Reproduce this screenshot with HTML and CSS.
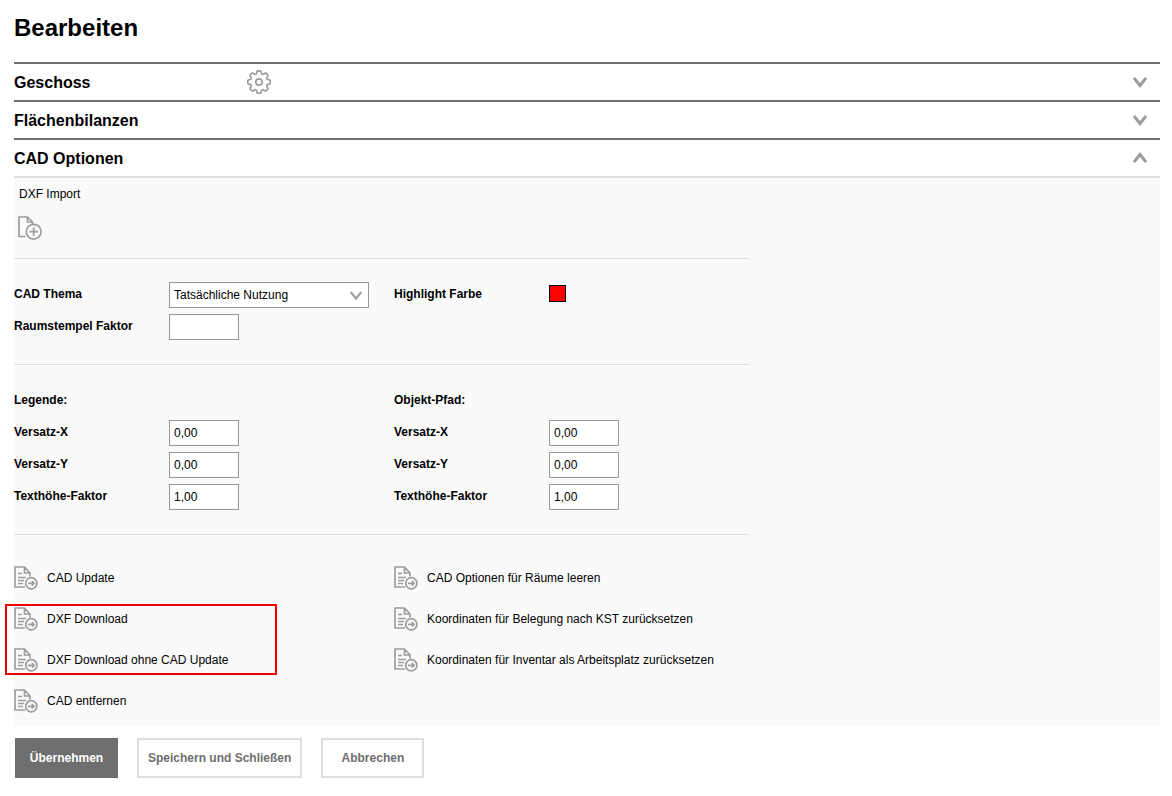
FILE: index.html
```html
<!DOCTYPE html>
<html lang="de">
<head>
<meta charset="utf-8">
<title>Bearbeiten</title>
<meta name="viewport" content="width=device-width, initial-scale=1">
<link rel="stylesheet" href="styles.css">
</head>
<body>
<svg class="sprite" aria-hidden="true">
  <symbol id="chevron-down" viewBox="0 0 16 12"><path d="M2 2l6 7.500 6-7.500"/></symbol>
  <symbol id="chevron-up" viewBox="0 0 16 12"><path d="M2 10l6-7.500 6 7.500"/></symbol>
  <symbol id="export" viewBox="0 0 24 24">
    <path d="M11 21H1V1h9.500l5.500 6v3.500M10.500 1v6H16M4 7.500h4M4 11.500h8M4 14.500h6M4 17.500h5"/>
    <circle cx="17.300" cy="17.300" r="5.600"/>
    <path d="M14 17.300h6M17.800 15l2.300 2.300-2.300 2.300"/>
  </symbol>
  <symbol id="import" viewBox="0 0 24 24">
    <path d="M7.500 20.500H1V1h8.500l5 5v2M9.500 1v5h5"/>
    <circle cx="15.700" cy="15.700" r="7.400"/>
    <path d="M15.700 11.500v8.400M11.500 15.700h8.400"/>
  </symbol>
  <symbol id="gear" viewBox="-12 -12 24 24">
    <path id="tooth" d="M-3.200-7.700C-2.200-8.100-2.300-8.900-2.300-9.700C-2.200-10.800-1.600-11.200-.9-11.200H.9C1.600-11.200 2.200-10.800 2.300-9.700C2.300-8.900 2.200-8.100 3.200-7.700"/>
    <use href="#tooth" transform="rotate(45)"/>
    <use href="#tooth" transform="rotate(90)"/>
    <use href="#tooth" transform="rotate(135)"/>
    <use href="#tooth" transform="rotate(180)"/>
    <use href="#tooth" transform="rotate(225)"/>
    <use href="#tooth" transform="rotate(270)"/>
    <use href="#tooth" transform="rotate(315)"/>
    <circle r="3.200"/>
  </symbol>
</svg>
<main class="page">
  <h1 class="title">Bearbeiten</h1>

  <section class="section">
    <h2 class="section-title">Geschoss</h2>
    <button class="icon-button" type="button" aria-label="Einstellungen"><svg class="icon"><use href="#gear"/></svg></button>
    <button class="toggle" type="button" aria-label="Geschoss aufklappen"><svg class="chevron"><use href="#chevron-down"/></svg></button>
  </section>
  <section class="section">
    <h2 class="section-title">Flächenbilanzen</h2>
    <button class="toggle" type="button" aria-label="Flächenbilanzen aufklappen"><svg class="chevron"><use href="#chevron-down"/></svg></button>
  </section>
  <section class="section">
    <h2 class="section-title">CAD Optionen</h2>
    <button class="toggle" type="button" aria-label="CAD Optionen zuklappen"><svg class="chevron"><use href="#chevron-up"/></svg></button>
  </section>

  <form class="form">
    <div class="panel">
      <div class="panel-body">
        <div class="import">
          <span>DXF Import</span>
          <button class="icon-button" type="button" aria-label="DXF Import"><svg class="icon"><use href="#import"/></svg></button>
        </div>

        <div class="columns group">
          <div class="fields">
            <div class="field">
              <label for="theme">CAD Thema</label>
              <div class="select-box">
                <select id="theme" class="control"><option>Tatsächliche Nutzung</option></select>
                <svg class="select-arrow"><use href="#chevron-down"/></svg>
              </div>
            </div>
            <div class="field"><label for="stamp">Raumstempel Faktor</label><input id="stamp" class="control number" type="text"></div>
          </div>
          <div class="fields">
            <div class="field"><label for="highlight">Highlight Farbe</label><input id="highlight" class="swatch" type="color" value="#ff0000"></div>
          </div>
        </div>

        <div class="columns group">
          <div class="fields">
            <h3 class="fields-title">Legende:</h3>
            <div class="field"><label for="legend-x">Versatz-X</label><input id="legend-x" class="control number" type="text" value="0,00"></div>
            <div class="field"><label for="legend-y">Versatz-Y</label><input id="legend-y" class="control number" type="text" value="0,00"></div>
            <div class="field"><label for="legend-f">Texthöhe-Faktor</label><input id="legend-f" class="control number" type="text" value="1,00"></div>
          </div>
          <div class="fields">
            <h3 class="fields-title">Objekt-Pfad:</h3>
            <div class="field"><label for="path-x">Versatz-X</label><input id="path-x" class="control number" type="text" value="0,00"></div>
            <div class="field"><label for="path-y">Versatz-Y</label><input id="path-y" class="control number" type="text" value="0,00"></div>
            <div class="field"><label for="path-f">Texthöhe-Faktor</label><input id="path-f" class="control number" type="text" value="1,00"></div>
          </div>
        </div>

        <div class="columns actions-group">
          <div class="actions">
            <button class="action" type="button"><svg class="icon"><use href="#export"/></svg>CAD Update</button>
            <div class="actions marked">
              <button class="action" type="button"><svg class="icon"><use href="#export"/></svg>DXF Download</button>
              <button class="action" type="button"><svg class="icon"><use href="#export"/></svg>DXF Download ohne CAD Update</button>
            </div>
            <button class="action" type="button"><svg class="icon"><use href="#export"/></svg>CAD entfernen</button>
          </div>
          <div class="actions">
            <button class="action" type="button"><svg class="icon"><use href="#export"/></svg>CAD Optionen für Räume leeren</button>
            <button class="action" type="button"><svg class="icon"><use href="#export"/></svg>Koordinaten für Belegung nach KST zurücksetzen</button>
            <button class="action" type="button"><svg class="icon"><use href="#export"/></svg>Koordinaten für Inventar als Arbeitsplatz zurücksetzen</button>
          </div>
        </div>
      </div>
    </div>

    <div class="buttons">
      <button class="button primary" type="submit">Übernehmen</button>
      <button class="button" type="button">Speichern und Schließen</button>
      <button class="button" type="button">Abbrechen</button>
    </div>
  </form>
</main>
</body>
</html>
```

FILE: styles.css
```css
*, *::after { box-sizing: border-box; }

body {
  margin: 0;
  background: #fff;
  color: #000;
  font: 12px/16px "Liberation Sans", Arial, sans-serif;
}

button, input, select { font: inherit; color: inherit; }

button {
  padding: 0;
  border: 0;
  background: none;
  cursor: pointer;
}

.sprite { position: absolute; width: 0; height: 0; }

.page { padding: 14px 12px 16px 14px; }

.title {
  margin: 0 0 20px;
  font-size: 24px;
  line-height: 28px;
}

/* Accordion headers */
.section {
  display: flex;
  align-items: center;
  height: 38px;
  border-top: 2px solid #6e6e6e;
}

.section-title {
  width: 233px;
  margin: 0;
  padding-top: 2px;
  font-size: 16px;
  line-height: 20px;
}

.toggle { margin-left: auto; padding: 0 12px; }

.icon, .chevron, .select-arrow {
  display: block;
  flex: none;
  fill: none;
  stroke: #9d9d9d;
  stroke-width: 1.7;
}

.icon { width: 24px; height: 24px; }
.chevron { width: 16px; height: 12px; stroke-width: 3; }

/* Options panel */
.panel {
  padding-bottom: 13px;
  border-top: 2px solid #dedede;
  background: #fafafa;
}

.panel-body { max-width: 735px; }

.import {
  display: flex;
  flex-direction: column;
  align-items: flex-start;
  gap: 14px;
  padding: 8px 4px 18px;
  border-bottom: 1px solid #dedede;
}

.import span { padding-left: 1px; }

.columns { display: grid; grid-template-columns: 380px 1fr; }

.group { padding: 23px 0 24px; border-bottom: 1px solid #dedede; }

.fields {
  display: flex;
  flex-direction: column;
  gap: 6px;
}

.field {
  display: grid;
  grid-template-columns: 155px 1fr;
  height: 26px;
}

.field label { font-weight: bold; line-height: 24px; }

.fields-title {
  height: 26px;
  margin: 0;
  font-size: 12px;
  line-height: 24px;
}

.control {
  height: 26px;
  margin: 0;
  padding: 0 4px;
  border: 1px solid #999;
  border-radius: 0;
  background: #fff;
}

.number { width: 70px; }

.select-box { position: relative; width: 200px; }
.select-box select { width: 100%; appearance: none; }

.select-arrow {
  position: absolute;
  top: 8px;
  right: 6px;
  width: 14px;
  height: 11px;
  stroke-width: 2.5;
  pointer-events: none;
}

.swatch {
  width: 17px;
  height: 17px;
  margin: 3px 0 0;
  padding: 0;
  border: 1px solid #000;
  background: none;
}

.swatch::-webkit-color-swatch-wrapper { padding: 0; }
.swatch::-webkit-color-swatch { border: 0; border-radius: 0; }

/* CAD actions */
.actions-group { padding-top: 31px; }

.actions {
  display: flex;
  flex-direction: column;
  align-items: flex-start;
  gap: 17px;
}

.action {
  display: flex;
  align-items: center;
  gap: 9px;
  height: 24px;
}

.marked { position: relative; }

.marked::after {
  content: "";
  position: absolute;
  top: -3px;
  left: -9px;
  width: 272px;
  height: 71px;
  border: 2px solid #f00000;
  pointer-events: none;
}

/* Footer buttons */
.buttons {
  display: flex;
  gap: 19px;
  padding: 12px 1px 0;
}

.button {
  min-width: 103px;
  height: 40px;
  padding: 0 9px;
  border: 2px solid #dedede;
  background: #fff;
  color: #6e6e6e;
  font-weight: bold;
}

.primary { border-color: #6e6e6e; background: #6e6e6e; color: #fff; }
```
